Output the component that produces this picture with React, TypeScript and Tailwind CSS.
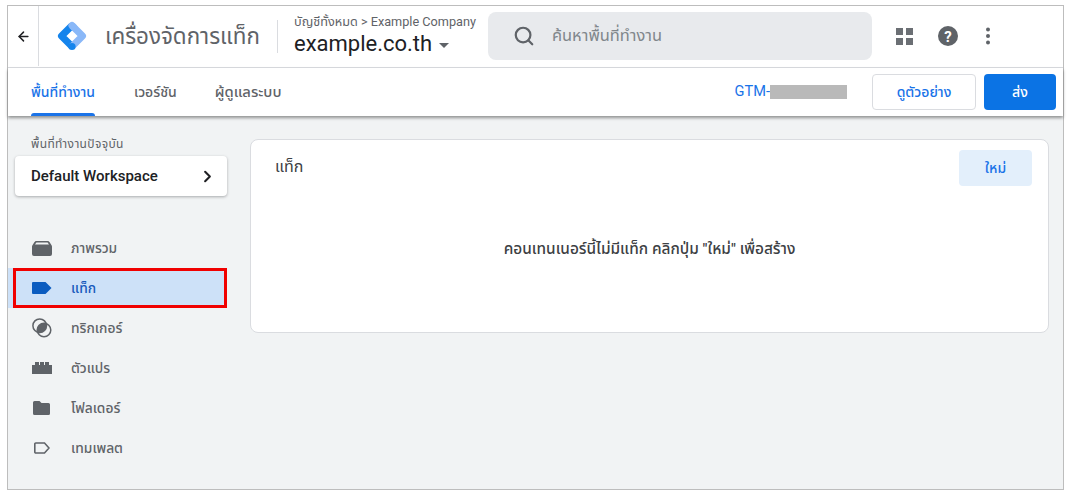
import React from "react";
import { ArrowLeft, Search, ChevronRight } from "lucide-react";

const font = "font-['Roboto','Noto_Sans','Noto_Sans_Thai','Liberation_Sans',sans-serif]";

function Logo() {
  return (
    <svg width="30" height="30" viewBox="0 0 30 30" fill="none" strokeWidth="7" strokeLinejoin="round">
      <path d="M15 4.5 L4.5 15 L15 25.5" stroke="#1584ec" />
      <path d="M15 4.5 L25.5 15 L15 25.5" stroke="#8ab8f8" />
      <path d="M15 4.5 L17 6.5" stroke="#8ab8f8" strokeLinecap="round" />
      <circle cx="15" cy="25.5" r="3.6" fill="#1584ec" stroke="none" />
    </svg>
  );
}

function IconOverview() {
  return (
    <svg width="20" height="15" viewBox="0 0 20 15" fill="#5f6368">
      <path d="M4.5 0 H15.5 C16.5 0 17 0.5 17.5 1 L19.4 4 C19.8 4.6 20 5 20 6 V13 A2 2 0 0 1 18 15 H2 A2 2 0 0 1 0 13 V6 C0 5 0.2 4.6 0.6 4 L2.5 1 C3 0.5 3.5 0 4.5 0 Z M3 3.6 H17 L15.6 1.4 H4.4 Z" fillRule="evenodd" />
    </svg>
  );
}
function IconTag({ color }: { color: string }) {
  return (
    <svg width="20" height="12" viewBox="0 0 20 12" fill={color}>
      <path d="M1 0 H13.5 L19.5 6 L13.5 12 H1 A1 1 0 0 1 0 11 V1 A1 1 0 0 1 1 0 Z" />
    </svg>
  );
}
function IconTrigger() {
  return (
    <svg width="20" height="20" viewBox="0 0 20 20">
      <defs>
        <clipPath id="lensClip">
          <circle cx="7.7" cy="7.7" r="6.8" />
        </clipPath>
      </defs>
      <circle cx="12" cy="12" r="6.8" fill="#5f6368" clipPath="url(#lensClip)" />
      <circle cx="7.7" cy="7.7" r="6.8" fill="none" stroke="#5f6368" strokeWidth="1.5" />
      <circle cx="12" cy="12" r="6.8" fill="none" stroke="#5f6368" strokeWidth="1.5" />
    </svg>
  );
}
function IconVariable() {
  return (
    <svg width="20" height="12" viewBox="0 0 20 12" fill="#5f6368">
      <path d="M0 3 H3 V0 H7 V3 H8 V0 H12 V3 H13 V0 H17 V3 H20 V12 H0 Z" />
    </svg>
  );
}
function IconFolder() {
  return (
    <svg width="17" height="14" viewBox="0 0 17 14" fill="#5f6368">
      <path d="M1.5 0 H6.5 L8.5 2 H15.5 A1.5 1.5 0 0 1 17 3.5 V12.5 A1.5 1.5 0 0 1 15.5 14 H1.5 A1.5 1.5 0 0 1 0 12.5 V1.5 A1.5 1.5 0 0 1 1.5 0 Z" />
    </svg>
  );
}
function IconTemplate() {
  return (
    <svg width="16" height="12" viewBox="0 0 16 12" fill="none" stroke="#5f6368" strokeWidth="1.6">
      <path d="M1.8 1 H10.5 L15 6 L10.5 11 H1.8 A1 1 0 0 1 0.8 10 V2 A1 1 0 0 1 1.8 1 Z" />
    </svg>
  );
}
function IconHelp() {
  return (
    <svg width="20" height="20" viewBox="0 0 20 20">
      <circle cx="10" cy="10" r="10" fill="#5f6368" />
      <text x="10" y="15.5" textAnchor="middle" fontSize="15" fontWeight="700" fill="#fff" fontFamily="Roboto, sans-serif">?</text>
    </svg>
  );
}
function IconDots() {
  return (
    <svg width="6" height="18" viewBox="0 0 6 18" fill="#5f6368">
      <circle cx="3" cy="2.5" r="2" />
      <circle cx="3" cy="9" r="2" />
      <circle cx="3" cy="15.5" r="2" />
    </svg>
  );
}

function NavRow({ icon, label, active }: { icon: React.ReactNode; label: string; active?: boolean }) {
  return (
    <div className={`relative flex h-10 items-center ${active ? "bg-[#cde1f8] rounded-r-lg mr-[2px]" : ""}`}>
      <div className="flex w-[63px] shrink-0 items-center justify-center pl-[4px]">{icon}</div>
      <span className={`text-[13.8px] font-medium ${active ? "text-[#185abc]" : "text-[#5f6368]"}`}>{label}</span>
      {active && <div className="absolute left-[5px] right-[-2px] top-0 bottom-0 border-[3px] border-[#f00000]" />}
    </div>
  );
}

export default function App() {
  return (
    <div className={`${font} h-[497px] w-[1068px] overflow-hidden bg-white pl-[7px] pr-[4px] pt-[5px] pb-[7px]`}>
      <div className="flex h-full w-full flex-col border border-[#bdbdbd] bg-[#f1f3f4]">
        {/* top bar */}
        <header className="flex h-[62px] shrink-0 items-center border-b border-[#dadce0] bg-white pb-[1px]">
          <div className="flex h-full w-[31px] shrink-0 items-center justify-center border-r border-[#dadce0]">
            <ArrowLeft size={15} strokeWidth={2.4} className="text-[#202124]" />
          </div>
          <div className="ml-[18px] shrink-0"><Logo /></div>
          <div className="ml-[18px] w-[155px] shrink-0 whitespace-nowrap text-[22.4px] leading-none text-[#5f6368]">เครื่องจัดการแท็ก</div>
          <div className="ml-[17px] h-[33px] w-px bg-[#dadce0]" />
          <div className="ml-[16px] w-[194px] shrink-0">
            <div className="whitespace-nowrap text-[12.7px] leading-[14px] text-[#5f6368]">บัญชีทั้งหมด &gt; Example Company</div>
            <div className="mt-[2px] flex items-center">
              <span className="text-[22px] leading-[26px] text-[#202124]">example.co.th</span>
              <span className="ml-[7px] mt-[2px] h-0 w-0 border-x-[5px] border-t-[5px] border-x-transparent border-t-[#5f6368]" />
            </div>
          </div>
          <div className="flex h-[48px] w-[384px] shrink-0 items-center rounded-lg bg-[#e8eaed]">
            <Search size={22} strokeWidth={2.4} className="ml-[25px] text-[#5f6368]" />
            <span className="ml-[17px] text-[16.4px] text-[#80868b]">ค้นหาพื้นที่ทำงาน</span>
          </div>
          <div className="ml-[24px] grid h-[17px] w-[17px] grid-cols-2 gap-[3px]">
            <span className="bg-[#6b6f74]" /><span className="bg-[#6b6f74]" />
            <span className="bg-[#6b6f74]" /><span className="bg-[#6b6f74]" />
          </div>
          <div className="ml-[25px]"><IconHelp /></div>
          <div className="ml-[27px] flex"><IconDots /></div>
        </header>

        {/* tabs */}
        <nav className="relative z-10 flex h-[48px] shrink-0 items-center bg-white pl-[23px] pr-[7px] shadow-[0_2px_3px_rgba(0,0,0,0.4)]">
          <div className="relative flex h-full items-center text-[14px] font-medium text-[#1a73e8]">
            พื้นที่ทำงาน
            <span className="absolute bottom-0 left-0 right-0 h-[3px] rounded-t bg-[#1a73e8]" />
          </div>
          <div className="ml-[39px] text-[14px] font-medium text-[#5f6368]">เวอร์ชัน</div>
          <div className="ml-[38px] text-[14.8px] font-medium text-[#5f6368]">ผู้ดูแลระบบ</div>
          <div className="ml-auto flex items-center">
            <span className="text-[14.6px] text-[#1a73e8]">GTM-</span>
            <span className="h-[14px] w-[77px] bg-[#b9b9b9] blur-[0.6px]" />
          </div>
          <button className="ml-[25px] h-[36px] w-[104px] rounded border border-[#dadce0] bg-white text-[14px] font-medium text-[#1a73e8]">ดูตัวอย่าง</button>
          <button className="ml-[8px] h-[36px] w-[72px] rounded bg-[#0b73e4] text-[14px] font-medium text-white">ส่ง</button>
        </nav>

        {/* body */}
        <div className="flex min-h-0 flex-1">
          <aside className="w-[219px] shrink-0">
            <div className="whitespace-nowrap pl-[23px] pt-[21px] text-[12px] leading-[14px] tracking-[0.35px] text-[#5f6368]">พื้นที่ทำงานปัจจุบัน</div>
            <div className="ml-[7px] mt-[5px] flex h-[40px] w-[212px] items-center justify-between rounded bg-white pl-[16px] pr-[10px] shadow-[0_1px_3px_rgba(60,64,67,0.4)]">
              <span className="text-[15px] font-medium text-[#202124]">Default Workspace</span>
              <ChevronRight size={19} strokeWidth={2.6} className="text-[#202124]" />
            </div>
            <div className="mt-[32px]">
              <NavRow icon={<IconOverview />} label="ภาพรวม" />
              <NavRow icon={<IconTag color="#0b5cc0" />} label="แท็ก" active />
              <NavRow icon={<IconTrigger />} label="ทริกเกอร์" />
              <NavRow icon={<IconVariable />} label="ตัวแปร" />
              <NavRow icon={<IconFolder />} label="โฟลเดอร์" />
              <NavRow icon={<IconTemplate />} label="เทมเพลต" />
            </div>
          </aside>
          <main className="min-w-0 flex-1 pl-[23px] pr-[14px] pt-[23px]">
            <div className="h-[194px] rounded-lg border border-[#dadce0] bg-white">
              <div className="flex items-start justify-between pl-[24px] pr-[16px] pt-[10px]">
                <span className="mt-[5px] text-[16px] text-[#3c4043]">แท็ก</span>
                <button className="h-[36px] w-[73px] rounded bg-[#e3effb] text-[14px] font-medium text-[#1a73e8]">ใหม่</button>
              </div>
              <p className="mt-[52px] text-center text-[15.4px] font-medium text-[#3c4043]">คอนเทนเนอร์นี้ไม่มีแท็ก คลิกปุ่ม "ใหม่" เพื่อสร้าง</p>
            </div>
          </main>
        </div>
      </div>
    </div>
  );
}
